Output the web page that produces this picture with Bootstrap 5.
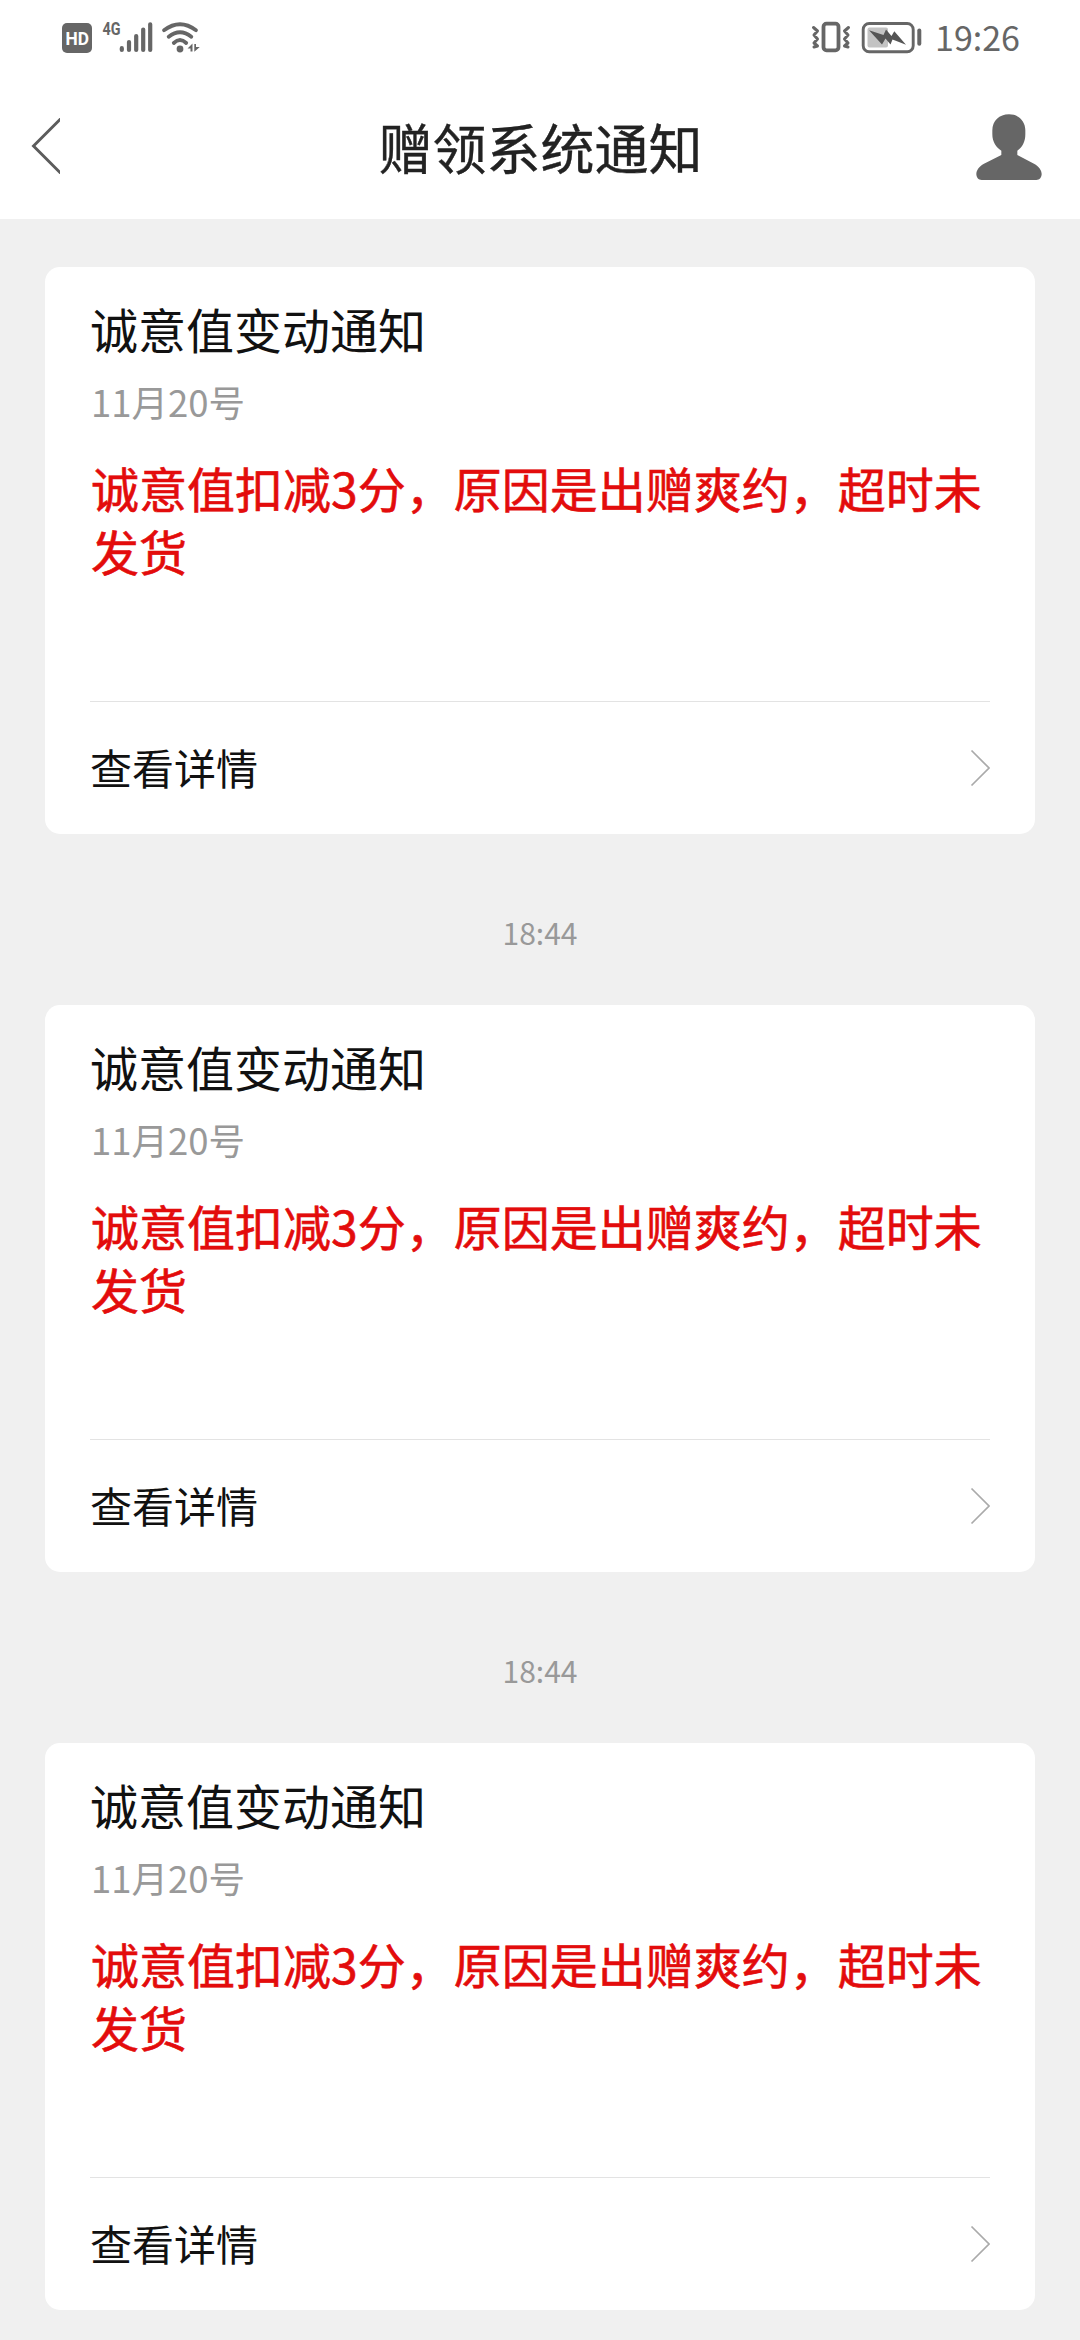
<!DOCTYPE html>
<html lang="zh-CN">
<head>
<meta charset="utf-8">
<meta name="viewport" content="width=device-width, initial-scale=1">
<title>赠领系统通知</title>
<link href="https://cdn.jsdelivr.net/npm/bootstrap@5.3.0/dist/css/bootstrap.min.css" rel="stylesheet">
<style>
  body { background: #f0f0f0; font-family: "Noto Sans CJK SC", sans-serif; color: #111; overflow: hidden; }
  svg { display: block; flex: none; }
  .status-bar { height: 72px; padding: 0 60px; }
  .clock { font-size: 34px; line-height: 72px; color: #666; margin-left: 11px; padding-top: 1px; }
  .title-bar { height: 147px; padding: 0 35px 0 30px; }
  .title-bar h1 { font-size: 54px; line-height: 60px; color: #222; margin-top: 3px; -webkit-text-stroke: .4px #222; }
  .back-slot { width: 78px; }
  .notices { padding: 48px 45px 0; }
  .notice { height: 567px; border: 0; border-radius: 15px; padding: 0 45px; color: #111; }
  .notice-main { height: 434px; padding-top: 31px; }
  .notice-main h2 { font-size: 48px; line-height: 60px; }
  .notice-date { font-size: 36.5px; line-height: 50px; color: #999; margin-top: 19px; padding-left: 1px; }
  .notice-text { font-size: 48px; line-height: 63px; color: #e30c0c; margin: 29px -8px 0 0; padding-left: 1px; -webkit-text-stroke: .6px #e30c0c; }
  .notice-more { height: 133px; border-top: 1px solid #e3e3e3; font-size: 42px; color: #111; }
  .notice-more span { margin-top: -3px; }
  .time-sep { height: 171px; font-size: 30px; line-height: 30px; padding-top: 83px; color: #999; }
</style>
</head>
<body>
<header class="bg-white">
  <div class="status-bar d-flex align-items-center justify-content-between">
    <svg width="142" height="72" viewBox="60 0 142 72" fill="#666">
      <rect x="62" y="23" width="30" height="30" rx="5"/>
      <text x="65.5" y="45" font-family="Roboto, sans-serif" font-weight="700" font-size="19" textLength="23.5" lengthAdjust="spacingAndGlyphs" fill="#fff">HD</text>
      <text x="102.5" y="35" font-family="Roboto, sans-serif" font-weight="700" font-size="18.5" textLength="18" lengthAdjust="spacingAndGlyphs">4G</text>
      <g stroke="#666" stroke-width="4.2" stroke-linecap="round">
        <path d="M121.8 48.2V50M129 42V50M136.2 36V50M143.2 29.5V50M150.2 24.3V50"/>
      </g>
      <g fill="none" stroke="#666" stroke-width="3.8" stroke-linecap="round">
        <path d="M164 30.2Q180 18.2 196 30.2M168.7 36.8Q180 27.6 191.3 36.8M173.8 43Q180 37.2 186.200 43"/>
      </g>
      <circle cx="180" cy="49" r="3.4"/>
      <path d="M187.500 48.500L192.500 43.500V51.500H190.500V48.500ZM194.300 44H196V47H199.800L194.300 51.800Z"/>
    </svg>
    <div class="d-flex align-items-center">
      <svg width="114" height="72" viewBox="810 0 114 72" fill="none" stroke="#666">
        <rect x="823.500" y="23.700" width="15" height="26.600" rx="3" stroke-width="3.8"/>
        <path d="M813.500 27.500L817.500 31L814 35L817.500 39L814 43L817.500 46L814 47M848.500 27.500L844.500 31L848 35L844.500 39L848 43L844.500 46L848 47" stroke-width="3" stroke-linejoin="round" stroke-linecap="round"/>
        <rect x="863.200" y="23.500" width="50" height="28.300" rx="6" stroke-width="2.900"/>
        <rect x="867.500" y="27.500" width="20.500" height="20" rx="2" fill="#c3c3c3" stroke="none"/>
        <path d="M869 30.300L883.500 35L886 29.500L891.500 36L894.300 31.300L906 44.800L892.500 39.500L890.500 44.500L885.500 38.500L882 44.500Z" fill="#555" stroke="none"/>
        <path d="M919.300 30.600V43.800" stroke-width="4" stroke-linecap="round"/>
      </svg>
      <span class="clock">19:26</span>
    </div>
  </div>
  <nav class="title-bar d-flex align-items-center justify-content-between">
    <div class="back-slot">
      <svg width="30" height="56" viewBox="30 118 30 56"><path d="M62 117.500L33.500 146L62 174.500" fill="none" stroke="#5c5c5c" stroke-width="2.900"/></svg>
    </div>
    <h1 class="fw-normal mb-0">赠领系统通知</h1>
    <svg width="72" height="72" viewBox="96 59 216 216" fill="#666"><path d="M204 72C233 72 253 92 253 120V132C253 154 244 171 229 181V194L279 220C294 228 302 240 302 251C302 260 296 269 286 269H122C112 269 106 260 106 251C106 240 114 228 129 220L181 194V181C165 171 154 154 154 132V120C154 92 175 72 204 72Z"/></svg>
  </nav>
</header>
<main class="notices">
  <article class="card notice">
    <div class="notice-main">
      <h2 class="fw-normal mb-0">诚意值变动通知</h2>
      <div class="notice-date">11月20号</div>
      <p class="notice-text">诚意值扣减3分，原因是出赠爽约，超时未发货</p>
    </div>
    <a class="notice-more d-flex align-items-center justify-content-between text-decoration-none"><span>查看详情</span>
      <svg width="20" height="38" viewBox="0 0 20 38"><path d="M1.500 1.500L19 19L1.500 36.500" fill="none" stroke="#aaa" stroke-width="1.700"/></svg></a>
  </article>
  <div class="time-sep text-center">18:44</div>
  <article class="card notice">
    <div class="notice-main">
      <h2 class="fw-normal mb-0">诚意值变动通知</h2>
      <div class="notice-date">11月20号</div>
      <p class="notice-text">诚意值扣减3分，原因是出赠爽约，超时未发货</p>
    </div>
    <a class="notice-more d-flex align-items-center justify-content-between text-decoration-none"><span>查看详情</span>
      <svg width="20" height="38" viewBox="0 0 20 38"><path d="M1.500 1.500L19 19L1.500 36.500" fill="none" stroke="#aaa" stroke-width="1.700"/></svg></a>
  </article>
  <div class="time-sep text-center">18:44</div>
  <article class="card notice">
    <div class="notice-main">
      <h2 class="fw-normal mb-0">诚意值变动通知</h2>
      <div class="notice-date">11月20号</div>
      <p class="notice-text">诚意值扣减3分，原因是出赠爽约，超时未发货</p>
    </div>
    <a class="notice-more d-flex align-items-center justify-content-between text-decoration-none"><span>查看详情</span>
      <svg width="20" height="38" viewBox="0 0 20 38"><path d="M1.500 1.500L19 19L1.500 36.500" fill="none" stroke="#aaa" stroke-width="1.700"/></svg></a>
  </article>
</main>
<script src="https://cdn.jsdelivr.net/npm/bootstrap@5.3.0/dist/js/bootstrap.bundle.min.js"></script>
</body>
</html>
